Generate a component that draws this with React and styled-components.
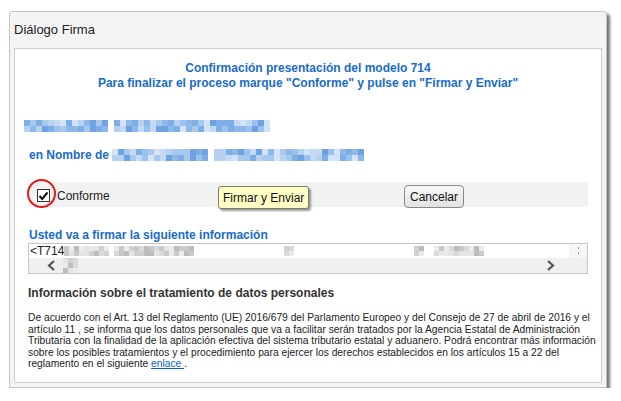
import React from 'react';
import styled, { createGlobalStyle } from 'styled-components';

const GlobalStyle = createGlobalStyle`
  body {
    margin: 0;
    background: #fff;
    font-family: "Liberation Sans", Arial, sans-serif;
  }
`;

const Page = styled.div`
  padding: 11px 0 0 9px;
`;

const Window = styled.div`
  box-sizing: border-box;
  width: 598px;
  height: 377px;
  display: flex;
  flex-direction: column;
  padding: 0 4px 4px 4px;
  background: #f4f4f4;
  border: 1px solid #c4c4c4;
  border-radius: 3px 3px 0 0;
  box-shadow: 3px 3px 3px rgba(0, 0, 0, 0.55);
`;

const TitleBar = styled.div`
  height: 36px;
  display: flex;
  align-items: center;
  padding: 0 0 2px 0;
  box-sizing: border-box;
  font-size: 13px;
  color: #222;
`;

const Panel = styled.div`
  flex: 1;
  background: #fff;
  border: 1px solid #cfcfcf;
  padding: 12px 13px 0 13px;
  overflow: hidden;
`;

const Heading = styled.div`
  text-align: center;
  color: #1a6bc8;
  font-weight: bold;
  font-size: 12px;
  line-height: 15px;
`;

const BlueLabel = styled.div`
  color: #1a6bc8;
  font-weight: bold;
  font-size: 12px;
  display: flex;
  align-items: center;
  margin-top: ${(p) => p.$mt || 0}px;
  margin-left: ${(p) => p.$ml || 0}px;
`;

const PixelGrid = styled.div`
  display: grid;
  grid-auto-flow: column;
  grid-template-rows: repeat(${(p) => p.$rows}, ${(p) => p.$cell}px);
  grid-auto-columns: ${(p) => p.$cell}px;
  margin-left: ${(p) => p.$ml || 0}px;
  margin-top: ${(p) => p.$mt || 0}px;
`;

const ActionRow = styled.div`
  position: relative;
  margin-top: 20px;
  height: 25px;
  background: #f2f2f2;
  display: grid;
  grid-template-columns: 190px 186px auto;
  align-items: center;
`;

const CheckCell = styled.label`
  display: flex;
  align-items: center;
  padding-left: 9px;
  font-size: 12px;
  color: #222;
  gap: 7px;
`;

const Box = styled.span`
  box-sizing: border-box;
  width: 13px;
  height: 13px;
  border: 1px solid #333;
  background: #fff;
  display: flex;
  align-items: center;
  justify-content: center;
`;

const RedRing = styled.span`
  position: absolute;
  left: -1px;
  top: -3px;
  width: 25px;
  height: 25px;
  border: 2px solid #e21b1b;
  border-radius: 50%;
`;

const TipButton = styled.button`
  justify-self: start;
  height: 23px;
  padding: 0 4px;
  font-family: inherit;
  font-size: 12px;
  color: #111;
  background: #ffffc6;
  border: 1px solid #7c7c6a;
  border-radius: 3px;
  box-shadow: 2px 2px 2px rgba(0, 0, 0, 0.4);
  margin-top: 4px;
`;

const PlainButton = styled.button`
  justify-self: start;
  height: 23px;
  padding: 0 5px;
  font-family: inherit;
  font-size: 12px;
  color: #111;
  background: linear-gradient(#f8f8f8, #e2e2e2);
  border: 1px solid #8a8a8a;
  border-radius: 4px;
  margin-top: 2px;
`;

const InfoBox = styled.div`
  box-sizing: border-box;
  height: 31px;
  border: 1px solid #c6c6c6;
  display: grid;
  grid-template-columns: 1fr 18px;
  grid-template-rows: 14px 15px;
  margin-top: 1px;
`;

const InfoLine = styled.div`
  display: flex;
  align-items: center;
  font-size: 12px;
  color: #222;
  padding-left: 1px;
  overflow: hidden;
  white-space: nowrap;
`;

const Grip = styled.div`
  background: #f6f6f6;
  display: flex;
  flex-direction: column;
  align-items: center;
  gap: 3px;
  padding-top: 3px;
`;

const GripDot = styled.span`
  width: 1px;
  height: 2px;
  background: #999;
`;

const ScrollTrack = styled.div`
  grid-column: 1 / 3;
  background: #efefef;
  display: flex;
  align-items: center;
  padding: 0 32px 0 18px;
  justify-content: space-between;
`;

const TrackLeft = styled.div`
  display: flex;
  align-items: center;
  gap: 7px;
`;

const SectionTitle = styled.div`
  margin-top: 12px;
  font-size: 12px;
  font-weight: bold;
  color: #333;
`;

const Legal = styled.p`
  margin: 12px 0 0 0;
  font-size: 10.25px;
  line-height: 11.6px;
  color: #222;
  white-space: nowrap;
`;

const Link = styled.a`
  color: #0a5fc4;
  text-decoration: underline;
`;

const bluePalette = ['#a8c8ee', '#8fb8ea', '#c4d9f4', '#7eaee6', '#b7d1f1', '#d3e4f8', '#9cc1ec', '#6fa2e2'];
const grayPalette = ['#d9d9d9', '#c9c9c9', '#e4e4e4', '#bdbdbd', '#d0d0d0', '#ebebeb'];

// segments: [cells, gap]
function Pixelated({ segments, rows = 2, cell = 6, palette, seed = 1, ml, mt }) {
  let s = seed;
  const rnd = () => {
    s = (s * 9301 + 49297) % 233280;
    return s / 233280;
  };
  const cells = [];
  segments.forEach(([n, gap], si) => {
    for (let c = 0; c < n + gap; c++) {
      for (let r = 0; r < rows; r++) {
        const blank = c >= n;
        const color = blank ? 'transparent' : palette[Math.floor(rnd() * palette.length)];
        cells.push(<span key={`${si}-${c}-${r}`} style={{ background: color }} />);
      }
    }
  });
  return (
    <PixelGrid $rows={rows} $cell={cell} $ml={ml} $mt={mt}>
      {cells}
    </PixelGrid>
  );
}

const Chevron = ({ dir }) => (
  <svg width="9" height="11" viewBox="0 0 9 11">
    <path
      d={dir === 'left' ? 'M7 1 L2 5.5 L7 10' : 'M2 1 L7 5.5 L2 10'}
      fill="none"
      stroke="#555"
      strokeWidth="2.2"
    />
  </svg>
);

export default function App() {
  return (
    <>
      <GlobalStyle />
      <Page>
        <Window>
          <TitleBar>Diálogo Firma</TitleBar>
          <Panel>
            <Heading>
              Confirmación presentación del modelo 714
              <br />
              Para finalizar el proceso marque "Conforme" y pulse en "Firmar y Enviar"
            </Heading>

            <Pixelated
              palette={bluePalette}
              seed={7}
              ml={-4}
              mt={29}
              segments={[[5, 0], [1, 0], [8, 1], [12, 0], [2, 0], [4, 0], [2, 0], [6, 0]]}
            />

            <BlueLabel $mt={16} $ml={1}>
              en Nombre de
              <Pixelated
                palette={bluePalette}
                seed={13}
                ml={3}
                segments={[[16, 1], [11, 0], [14, 0]]}
              />
            </BlueLabel>

            <ActionRow>
              <RedRing />
              <CheckCell>
                <Box>
                  <svg width="11" height="10" viewBox="0 0 11 10">
                    <path d="M1.5 5 L4.2 8 L9.5 1.5" fill="none" stroke="#111" strokeWidth="2" />
                  </svg>
                </Box>
                Conforme
              </CheckCell>
              <TipButton>Firmar y Enviar</TipButton>
              <PlainButton>Cancelar</PlainButton>
            </ActionRow>

            <BlueLabel $mt={21} $ml={1}>
              Usted va a firmar la siguiente información
            </BlueLabel>

            <InfoBox>
              <InfoLine>
                &lt;T714
                <Pixelated
                  palette={grayPalette}
                  seed={3}
                  rows={2}
                  cell={5}
                  segments={[[9, 1], [13, 0], [3, 18], [2, 24], [2, 2], [10, 8]]}
                />
              </InfoLine>
              <Grip>
                <GripDot />
                <GripDot />
              </Grip>
              <ScrollTrack>
                <TrackLeft>
                  <Chevron dir="left" />
                  <Pixelated palette={grayPalette} seed={5} rows={3} cell={5} segments={[[3, 0]]} />
                </TrackLeft>
                <Chevron dir="right" />
              </ScrollTrack>
            </InfoBox>

            <SectionTitle>Información sobre el tratamiento de datos personales</SectionTitle>
            <Legal>
              De acuerdo con el Art. 13 del Reglamento (UE) 2016/679 del Parlamento Europeo y del Consejo de 27 de abril de 2016 y el
              <br />
              artículo 11 , se informa que los datos personales que va a facilitar serán tratados por la Agencia Estatal de Administración
              <br />
              Tributaria con la finalidad de la aplicación efectiva del sistema tributario estatal y aduanero. Podrá encontrar más información
              <br />
              sobre los posibles tratamientos y el procedimiento para ejercer los derechos establecidos en los artículos 15 a 22 del
              <br />
              reglamento en el siguiente <Link href="#">enlace </Link>.
            </Legal>
          </Panel>
        </Window>
      </Page>
    </>
  );
}
